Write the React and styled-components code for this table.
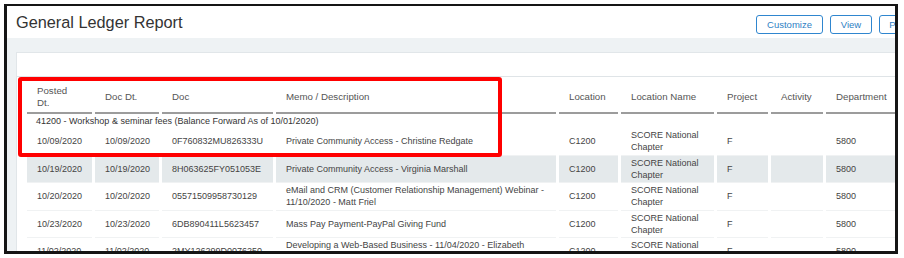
import styled, { createGlobalStyle } from "styled-components";

const GlobalStyle = createGlobalStyle`
  body {
    margin: 0;
    background: #ffffff;
    font-family: "Liberation Sans", Arial, sans-serif;
  }
`;

const Frame = styled.div`
  position: relative;
  margin: 4px 0 0 4px;
  width: 888px;
  height: 245px;
  border-style: solid;
  border-color: #151515;
  border-width: 2px 3px 3px 3px;
  overflow: hidden;
`;

const Page = styled.div`
  width: 920px;
`;

const Header = styled.div`
  display: flex;
  align-items: center;
  height: 32px;
  padding: 0 8px 0 9px;
  background: #ffffff;
`;

const Title = styled.h1`
  flex: 1;
  margin: 0;
  font-size: 16.3px;
  font-weight: 400;
  color: #333333;
`;

const Toolbar = styled.div`
  display: flex;
  gap: 7px;
  margin-top: 4px;
`;

const Button = styled.button`
  width: ${(p) => p.w || 40}px;
  height: 19px;
  padding: 0;
  border: 1px solid #2f86cf;
  border-radius: 3px;
  background: #ffffff;
  color: #2f7fc4;
  font-family: "Liberation Sans", Arial, sans-serif;
  font-size: 9.5px;
`;

const Body = styled.div`
  background: #eef2f4;
  padding: 14px 0 0 9px;
  height: 200px;
`;

const Panel = styled.div`
  background: #ffffff;
  border: 1px solid #e1e6e9;
  border-right: none;
  height: 100%;
`;

const Spacer = styled.div`
  height: 23px;
  border-bottom: 1px solid #dfe4e7;
`;

const Table = styled.table`
  table-layout: fixed;
  border-collapse: separate;
  border-spacing: 3px 0;
  margin-left: 7px;
  width: 895px;
  font-size: 9px;
  color: #444444;
`;

const Th = styled.th`
  padding: 8px 12px 3px 10px;
  line-height: 12px;
  font-size: 9.7px;
  font-weight: 400;
  text-align: left;
  color: #555555;
  border-bottom: 2px solid #9c9c9c;
  vertical-align: middle;
`;

const GroupCell = styled.td`
  padding: 1px 9px;
  line-height: 12px;
  color: #333333;
  white-space: nowrap;
`;

const Row = styled.tr`
  background: ${(p) => (p.shaded ? "#e4e9eb" : "#ffffff")};
`;

const Td = styled.td`
  padding: 1.25px 10px;
  line-height: 12px;
  vertical-align: middle;
  border-bottom: 1px solid #f0f2f3;
  overflow: hidden;
`;

const Highlight = styled.div`
  position: absolute;
  left: 11px;
  top: 71px;
  width: 476px;
  height: 72px;
  border: 4px solid #ff0000;
  border-radius: 3px;
  pointer-events: none;
`;

const columns = [
  { label: "Posted Dt.", w: 65 },
  { label: "Doc Dt.", w: 64 },
  { label: "Doc", w: 111 },
  { label: "Memo / Description", w: 280 },
  { label: "Location", w: 59 },
  { label: "Location Name", w: 93 },
  { label: "Project", w: 51 },
  { label: "Activity", w: 52 },
  { label: "Department", w: 90 },
];

const rows = [
  ["10/09/2020", "10/09/2020", "0F760832MU826333U", "Private Community Access - Christine Redgate"],
  ["10/19/2020", "10/19/2020", "8H063625FY051053E", "Private Community Access - Virginia Marshall"],
  ["10/20/2020", "10/20/2020", "05571509958730129", "eMail and CRM (Customer Relationship Management) Webinar - 11/10/2020 - Matt Friel"],
  ["10/23/2020", "10/23/2020", "6DB890411L5623457", "Mass Pay Payment-PayPal Giving Fund"],
  ["11/02/2020", "11/02/2020", "2MY126299D0076250", "Developing a Web-Based Business - 11/04/2020 - Elizabeth Kingsbury"],
];

const App = () => {
  return (
    <>
      <GlobalStyle />
      <Frame>
        <Page>
          <Header>
            <Title>General Ledger Report</Title>
            <Toolbar>
              <Button w={67}>Customize</Button>
              <Button w={42}>View</Button>
              <Button w={40}>Print</Button>
            </Toolbar>
          </Header>
          <Body>
            <Panel>
              <Spacer />
              <Table>
                <colgroup>
                  {columns.map((c) => (
                    <col key={c.label} style={{ width: c.w }} />
                  ))}
                </colgroup>
                <thead>
                  <tr>
                    {columns.map((c) => (
                      <Th key={c.label}>{c.label}</Th>
                    ))}
                  </tr>
                </thead>
                <tbody>
                  <tr>
                    <GroupCell colSpan={9}>
                      41200 - Workshop &amp; seminar fees (Balance Forward As of 10/01/2020)
                    </GroupCell>
                  </tr>
                  {rows.map((r, i) => (
                    <Row key={i} shaded={i === 1}>
                      <Td>{r[0]}</Td>
                      <Td>{r[1]}</Td>
                      <Td>{r[2]}</Td>
                      <Td>{r[3]}</Td>
                      <Td>C1200</Td>
                      <Td>SCORE National Chapter</Td>
                      <Td>F</Td>
                      <Td></Td>
                      <Td>5800</Td>
                    </Row>
                  ))}
                </tbody>
              </Table>
            </Panel>
          </Body>
        </Page>
        <Highlight />
      </Frame>
    </>
  );
};

export default App;
